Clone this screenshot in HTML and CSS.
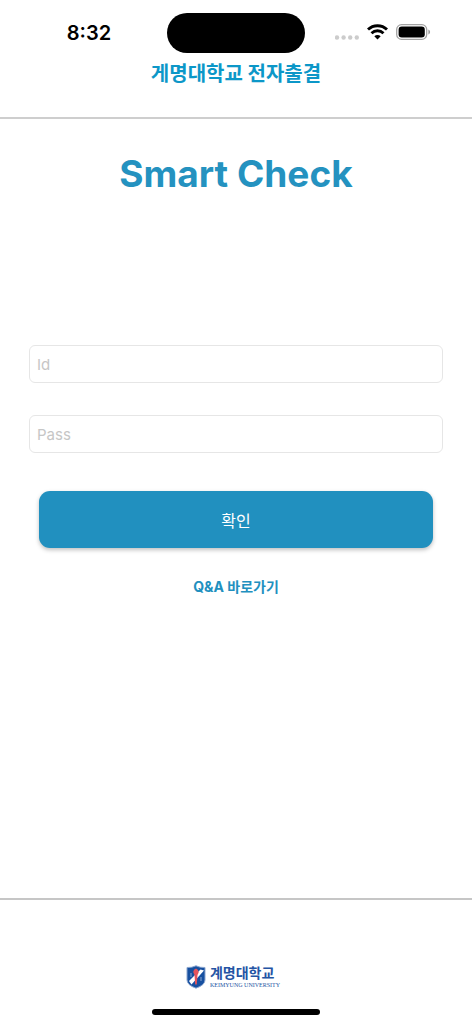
FILE: index.html
```html
<!DOCTYPE html>
<html lang="ko">
<head>
    <meta charset="UTF-8">
    <meta name="viewport" content="width=device-width, initial-scale=1">
    <title>Smart Check</title>
    <link rel="stylesheet" href="styles.css">
</head>
<body>

    <header>
        <div class="status">
            <span class="time">8:32</span>
            <div class="island"></div>
            <div class="icons">
                <svg width="24" height="5" viewBox="0 0 24 5" fill="#cccccc">
                    <circle cx="2" cy="2.5" r="2.2"/>
                    <circle cx="8.6" cy="2.5" r="2.2"/>
                    <circle cx="15.2" cy="2.5" r="2.2"/>
                    <circle cx="21.8" cy="2.5" r="2.2"/>
                </svg>
                <svg width="21" height="16" viewBox="0 0 21 16" fill="none" stroke="#000" stroke-width="2.9">
                    <path d="M1 5.5 C6.2 .4 14.8 .4 20 5.5"/>
                    <path d="M4.5 9.2 C7.9 6 13.1 6 16.5 9.2"/>
                    <path d="M7.3 12.3 C9.1 10.6 11.9 10.6 13.7 12.3 L10.5 15.6 Z" fill="#000" stroke="none"/>
                </svg>
                <svg width="35" height="16" viewBox="0 0 35 16">
                    <rect x=".7" y=".7" width="30" height="14.6" rx="4.8" fill="none" stroke="#a3a3a3" stroke-width="1.3"/>
                    <rect x="2.6" y="2.6" width="26.2" height="10.8" rx="3.2"/>
                    <path d="M32.4 5.5 C34.6 6.4 34.6 9.6 32.4 10.5 Z" fill="#999"/>
                </svg>
            </div>
        </div>
        <p class="school">게명대학교 전자출결</p>
    </header>

    <main>
        <h1>Smart Check</h1>
        <form>
            <input type="text" placeholder="Id" aria-label="Id">
            <input type="password" placeholder="Pass" aria-label="Pass">
            <button type="submit">확인</button>
        </form>
        <a class="qna" href="#qna">Q&amp;A 바로가기</a>
    </main>

    <footer>
        <div class="logo">
            <svg width="20" height="24" viewBox="0 0 20 24">
                <path d="M1 2.5 Q6 2.8 10 .8 Q14 2.8 19 2.5 V15 Q19 20 10 23.2 Q1 20 1 15 Z" fill="#1750a0" stroke="#8ba6d0" stroke-width="1"/>
                <path d="M3 16 L14.5 4.5 L18 5.5 L5.5 19.5 Z" fill="#fff"/>
                <path d="M4 9 H6 M4 11 H6 M14 13 H16 M14 15 H16" stroke="#8ba6d0"/>
                <path d="M7.2 7 Q7.5 4 10 3.5 Q12.7 4.5 12.7 7.5 L11.5 10 L10.8 19.5 H9.2 L8.5 10 Z" fill="#e4545c"/>
            </svg>
            <div class="logo-text">
                <strong>계명대학교</strong>
                <small>KEIMYUNG UNIVERSITY</small>
            </div>
        </div>
        <div class="home-bar"></div>
    </footer>

</body>
</html>
```

FILE: styles.css
```css
* {
    box-sizing: border-box;
}
body {
    display: flex;
    flex-direction: column;
    min-height: 100vh;
    margin: 0;
    background-color: #fff;
    font-family: Inter, "Noto Sans CJK KR", sans-serif;
}
header {
    padding: 13px 0 29px;
    border-bottom: 2px solid #cecece;
}
.status {
    display: grid;
    grid-template-columns: 1fr 138px 1fr;
    align-items: center;
}
.time {
    padding-left: 11px;
    font-size: 20px;
    font-weight: 600;
    line-height: 24px;
    text-align: center;
}
.island {
    height: 40px;
    border-radius: 20px;
    background-color: #000;
}
.icons {
    display: flex;
    align-items: flex-end;
    justify-content: flex-end;
    gap: 8px;
    padding: 0 41px 2px 0;
}
.school {
    margin: 7px 0 0;
    color: #0c97c8;
    font-size: 20px;
    font-weight: 700;
    line-height: 28px;
    text-align: center;
}

main {
    flex: 1;
    text-align: center;
}
h1 {
    margin: 31px 0 147px;
    color: #2492c0;
    font-size: 37px;
    font-weight: 700;
    line-height: 48px;
}
form {
    display: flex;
    flex-direction: column;
    gap: 32px;
    padding: 0 29px;
}
input {
    width: 100%;
    height: 38px;
    padding: 0 7px;
    border: 1px solid #e6e6e6;
    border-radius: 6px;
    font-family: inherit;
    font-size: 15px;
}
input::placeholder {
    color: #c6c6c6;
}
button {
    height: 57px;
    margin: 6px 10px 0;
    border: 0;
    border-radius: 11px;
    background-color: #2190bf;
    box-shadow: 0 2px 4px rgba(0,0,0,0.25);
    color: white;
    font-family: inherit;
    font-size: 16px;
    font-weight: 400;
}
.qna {
    display: inline-block;
    margin-top: 29px;
    color: #2190bf;
    font-size: 14px;
    font-weight: 700;
    line-height: 20px;
    text-decoration: none;
}

footer {
    display: flex;
    flex-direction: column;
    align-items: center;
    gap: 20px;
    padding: 64px 0 9px;
    border-top: 2px solid #c6c6c6;
}
.logo {
    display: flex;
    align-items: center;
    gap: 4px;
    padding-right: 6px;
    color: #2454a4;
}
.logo-text {
    display: flex;
    flex-direction: column;
    gap: 1px;
}
.logo-text strong {
    font-size: 14px;
    font-weight: 700;
    line-height: 17px;
}
.logo-text small {
    font-family: "Liberation Serif", serif;
    font-size: 6px;
    line-height: 7px;
}
.home-bar {
    width: 168px;
    height: 6px;
    border-radius: 3px;
    background-color: #000;
}
```
